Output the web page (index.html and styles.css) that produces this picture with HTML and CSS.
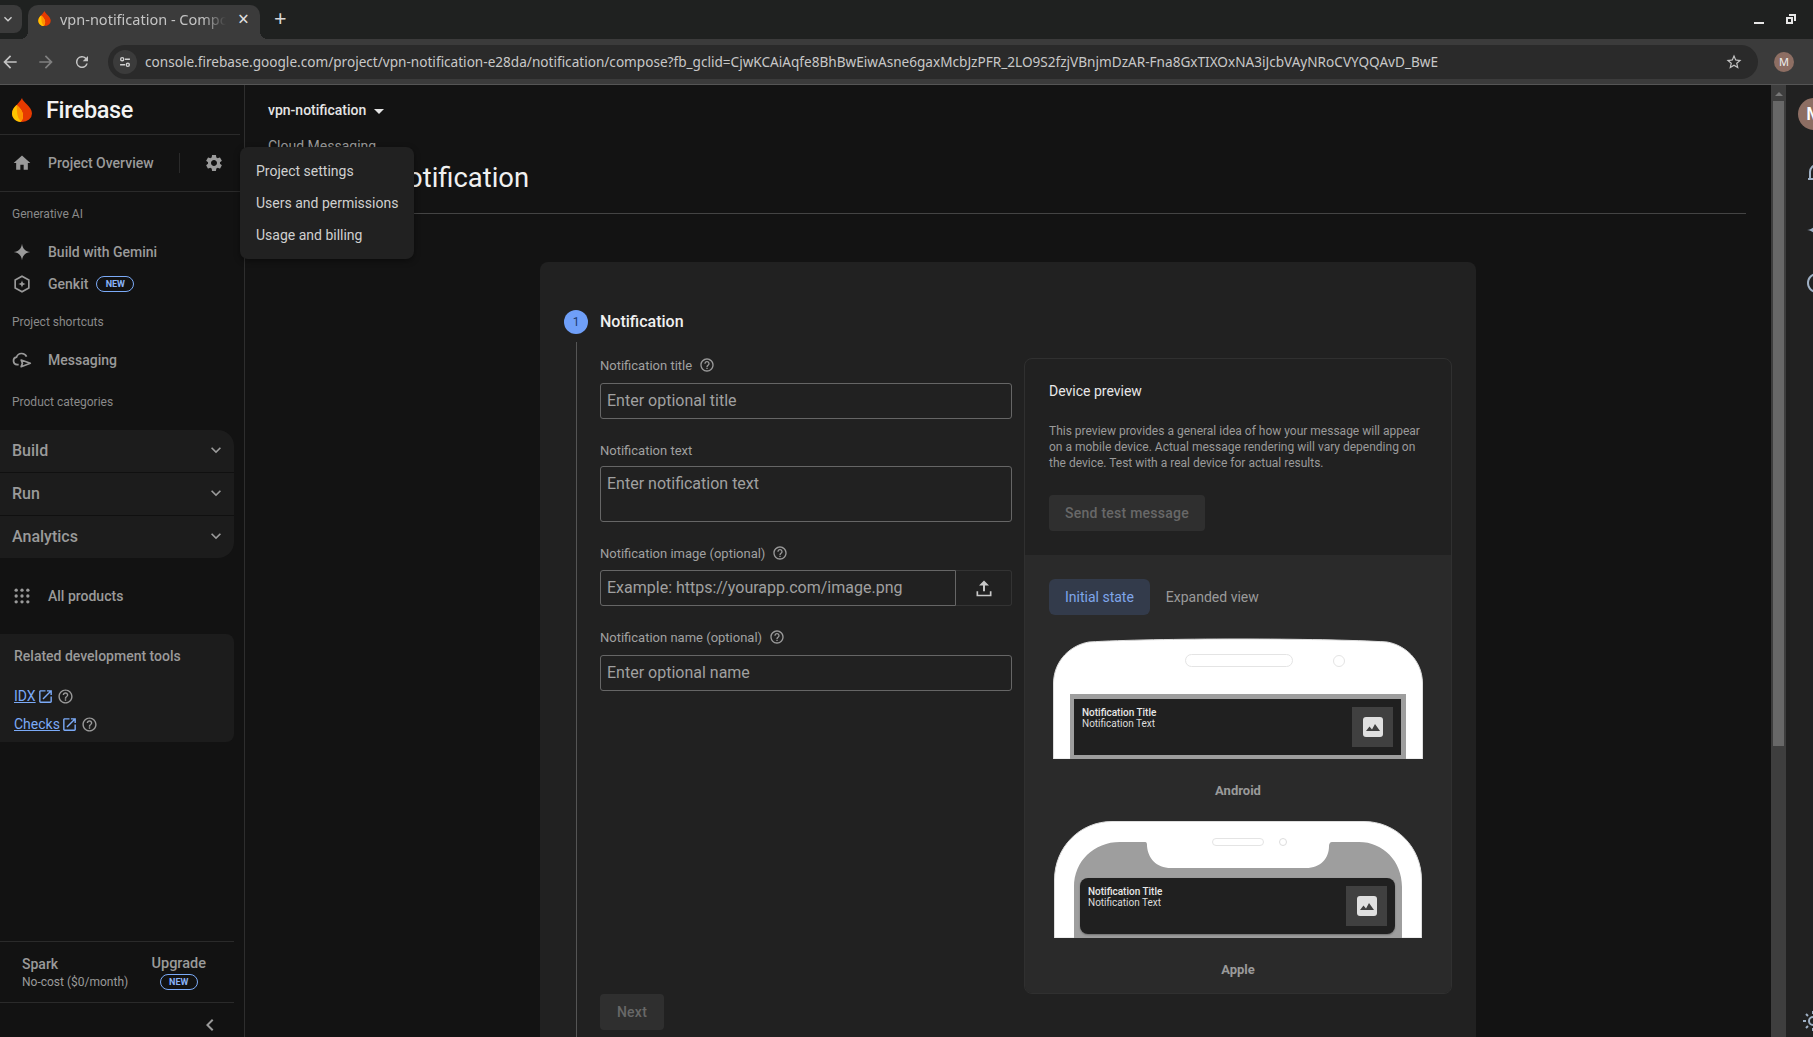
FILE: index.html
```html
<!DOCTYPE html>
<html lang="en">

<head>
  <meta charset="UTF-8" />
  <title>vpn-notification - Compose notification</title>
  <link rel="stylesheet" href="styles.css">
</head>

<body>
  <svg class="icon-defs" width="0" height="0">
    <symbol id="i-home" viewBox="0 0 24 24"><path d="M10 20v-6h4v6h5v-8h3L12 3 2 12h3v8z" /></symbol>
    <symbol id="i-gear" viewBox="0 0 24 24"><path d="M19.14 12.94c.04-.3.06-.61.06-.94 0-.32-.02-.64-.07-.94l2.03-1.58c.18-.14.23-.41.12-.61l-1.92-3.32c-.12-.22-.37-.29-.59-.22l-2.39.96c-.5-.38-1.03-.7-1.62-.94l-.36-2.54c-.04-.24-.24-.41-.48-.41h-3.84c-.24 0-.43.17-.47.41l-.36 2.54c-.59.24-1.13.57-1.62.94l-2.39-.96c-.22-.08-.47 0-.59.22L2.74 8.87c-.12.21-.08.47.12.61l2.03 1.58c-.05.3-.09.63-.09.94s.02.64.07.94l-2.03 1.58c-.18.14-.23.41-.12.61l1.92 3.32c.12.22.37.29.59.22l2.39-.96c.5.38 1.03.7 1.62.94l.36 2.54c.05.24.24.41.48.41h3.84c.24 0 .44-.17.47-.41l.36-2.54c.59-.24 1.13-.56 1.62-.94l2.39.96c.22.08.47 0 .59-.22l1.92-3.32c.12-.22.07-.47-.12-.61l-2.01-1.58zM12 15.6c-1.98 0-3.6-1.62-3.6-3.6s1.62-3.6 3.6-3.6 3.6 1.62 3.6 3.6-1.62 3.6-3.6 3.6z" /></symbol>
    <symbol id="i-spark" viewBox="0 0 24 24"><path d="M12 2C12.8 8 16 11.2 22 12 16 12.8 12.8 16 12 22 11.2 16 8 12.8 2 12 8 11.2 11.2 8 12 2z" /></symbol>
    <symbol id="i-help" viewBox="0 0 24 24"><path d="M11 18h2v-2h-2v2zm1-16C6.48 2 2 6.48 2 12s4.48 10 10 10 10-4.48 10-10S17.52 2 12 2zm0 18c-4.41 0-8-3.59-8-8s3.59-8 8-8 8 3.59 8 8-3.59 8-8 8zm0-14c-2.21 0-4 1.79-4 4h2c0-1.1.9-2 2-2s2 .9 2 2c0 2-3 1.75-3 5h2c0-2.25 3-2.5 3-5 0-2.21-1.79-4-4-4z" /></symbol>
    <symbol id="i-open" viewBox="0 0 24 24"><path d="M19 19H5V5h7V3H5c-1.11 0-2 .9-2 2v14c0 1.1.89 2 2 2h14c1.1 0 2-.9 2-2v-7h-2v7zM14 3v2h3.59l-9.83 9.83 1.41 1.41L19 6.41V10h2V3h-7z" /></symbol>
    <symbol id="i-down" viewBox="0 0 24 24"><path d="M16.59 8.59 12 13.17 7.41 8.59 6 10l6 6 6-6z" /></symbol>
    <symbol id="i-picture" viewBox="0 0 20 20">
      <rect width="20" height="20" rx="3" fill="#e0e0e0" />
      <path d="M3 14l3.5-4.500 2.500 3 3-5.500 5 7z" fill="#404040" />
    </symbol>
  </svg>

  <header class="browser">
    <div class="tab-strip">
      <div class="tab-search"><svg class="ico-16" viewBox="0 0 24 24"><use href="#i-down" /></svg></div>
      <div class="tab">
        <svg class="tab-favicon" viewBox="0 0 20 24">
          <path d="M10 0c.8 4.500 10 8.500 10 15.500a10 8.500 0 0 1-20 0C0 9.500 7 6 10 0z" fill="#e63a00" />
          <path d="M4.500 7C1.500 9.500 0 12.500 0 15.500 0 20 4 24 8.500 24c1.500-1.500 2.500-3.500 2.500-6 0-4.500-3-8.500-6.500-11z" fill="#ffc400" />
          <path d="M4.500 7c3.500 2.500 6.500 6.500 6.500 11 0 2-.7 4-2 5.500-2-2-3.500-5-3.800-8z" fill="#ff9100" />
        </svg>
        <span class="tab-title">vpn-notification - Compose notification</span>
        <span class="tab-close">×</span>
      </div>
      <span class="tab-new">+</span>
      <div class="window-btns">
        <span class="win-min"></span>
        <svg class="win-restore" viewBox="0 0 10 10">
          <path fill-rule="evenodd" d="M3 0h7v7H8V2H3zM0 3h7v7H0zM2 5v3h3V5z" />
        </svg>
      </div>
    </div>
    <div class="toolbar">
      <svg class="tool-ico" viewBox="0 0 24 24"><path d="M20 11H7.800l5.600-5.600L12 4l-8 8 8 8 1.400-1.400L7.800 13H20z" /></svg>
      <svg class="tool-ico dim" viewBox="0 0 24 24"><path d="M4 11h12.200l-5.600-5.600L12 4l8 8-8 8-1.400-1.400 5.600-5.600H4z" /></svg>
      <svg class="tool-ico reload" viewBox="0 0 24 24"><path d="M17.650 6.350A8 8 0 1 0 19.730 14h-2.080A6 6 0 1 1 12 6c1.660 0 3.140.69 4.220 1.780L13 11h7V4z" /></svg>
      <div class="omnibox">
        <span class="site-info">
          <svg viewBox="0 0 20 20" class="site-ico">
            <circle cx="6" cy="6" r="2.200" fill="none" />
            <path d="M10 6h7M3 14h7" fill="none" />
            <circle cx="14" cy="14" r="2.200" fill="none" />
          </svg>
        </span>
        <span class="url">console.firebase.google.com/project/vpn-notification-e28da/notification/compose?fb_gclid=CjwKCAiAqfe8BhBwEiwAsne6gaxMcbJzPFR_2LO9S2fzjVBnjmDzAR-Fna8GxTIXOxNA3iJcbVAyNRoCVYQQAvD_BwE</span>
        <svg class="star" viewBox="0 0 24 24"><path d="M22 9.240l-7.190-.62L12 2 9.190 8.630 2 9.240l5.460 4.730L5.820 21 12 17.270 18.180 21l-1.630-7.030L22 9.240zM12 15.400l-3.760 2.270 1-4.280-3.320-2.880 4.380-.38L12 6.100l1.710 4.040 4.380.38-3.320 2.880 1 4.280L12 15.400z" /></svg>
      </div>
      <span class="profile">M</span>
    </div>
  </header>

  <div class="app">
    <aside class="sidebar">
      <div class="brand">
        <svg class="brand-logo" viewBox="0 0 20 24">
          <path d="M10 0c.8 4.500 10 8.500 10 15.500a10 8.500 0 0 1-20 0C0 9.500 7 6 10 0z" fill="#e63a00" />
          <path d="M4.500 7C1.500 9.500 0 12.500 0 15.500 0 20 4 24 8.500 24c1.500-1.500 2.500-3.500 2.500-6 0-4.500-3-8.500-6.500-11z" fill="#ffc400" />
          <path d="M4.500 7c3.500 2.500 6.500 6.500 6.500 11 0 2-.7 4-2 5.500-2-2-3.500-5-3.800-8z" fill="#ff9100" />
        </svg>
        <span class="brand-name">Firebase</span>
      </div>

      <div class="overview">
        <svg class="nav-ico" viewBox="0 0 24 24"><use href="#i-home" /></svg>
        <span class="overview-name">Project Overview</span>
        <span class="overview-gear"><svg class="nav-ico" viewBox="0 0 24 24"><use href="#i-gear" /></svg></span>
      </div>

      <p class="nav-label">Generative AI</p>
      <div class="nav-item">
        <svg class="nav-ico" viewBox="0 0 24 24"><use href="#i-spark" /></svg>
        <span>Build with Gemini</span>
      </div>
      <div class="nav-item">
        <svg class="nav-ico" viewBox="0 0 24 24">
          <path d="M12 2.600l8.200 4.700v9.400L12 21.400l-8.200-4.700V7.300z" fill="none" stroke="currentColor" stroke-width="2" />
          <path d="M12 7.500c.5 3 1.500 4 4.500 4.500-3 .5-4 1.500-4.500 4.500-.5-3-1.500-4-4.500-4.500 3-.5 4-1.500 4.500-4.500z" />
        </svg>
        <span>Genkit</span>
        <span class="pill">NEW</span>
      </div>

      <p class="nav-label">Project shortcuts</p>
      <div class="nav-item">
        <svg class="nav-ico" viewBox="0 0 24 24">
          <path d="M8 17.500H6a4.500 4.500 0 0 1-.6-8.900A6.500 6.500 0 0 1 17.500 8" fill="none" stroke="currentColor" stroke-width="2" />
          <path d="M11 12l11 4-11 4 1.500-4z" fill="none" stroke="currentColor" stroke-width="2" stroke-linejoin="round" />
        </svg>
        <span>Messaging</span>
      </div>

      <p class="nav-label categories">Product categories</p>
      <div class="accordion">
        <div class="acc-row">Build <svg class="chev" viewBox="0 0 24 24"><use href="#i-down" /></svg></div>
        <div class="acc-row">Run <svg class="chev" viewBox="0 0 24 24"><use href="#i-down" /></svg></div>
        <div class="acc-row">Analytics <svg class="chev" viewBox="0 0 24 24"><use href="#i-down" /></svg></div>
      </div>

      <div class="nav-item all-products">
        <svg class="nav-ico" viewBox="0 0 24 24">
          <circle cx="5" cy="5" r="2" />
          <circle cx="12" cy="5" r="2" />
          <circle cx="19" cy="5" r="2" />
          <circle cx="5" cy="12" r="2" />
          <circle cx="12" cy="12" r="2" />
          <circle cx="19" cy="12" r="2" />
          <circle cx="5" cy="19" r="2" />
          <circle cx="12" cy="19" r="2" />
          <circle cx="19" cy="19" r="2" />
        </svg>
        <span>All products</span>
      </div>

      <div class="related">
        <div class="related-title">Related development tools</div>
        <div class="related-link">
          <a>IDX</a>
          <svg class="open-ico" viewBox="0 0 24 24"><use href="#i-open" /></svg>
          <svg class="help-ico" viewBox="0 0 24 24"><use href="#i-help" /></svg>
        </div>
        <div class="related-link">
          <a>Checks</a>
          <svg class="open-ico" viewBox="0 0 24 24"><use href="#i-open" /></svg>
          <svg class="help-ico" viewBox="0 0 24 24"><use href="#i-help" /></svg>
        </div>
      </div>

      <div class="plan">
        <div>
          <div class="plan-name">Spark</div>
          <div class="plan-cost">No-cost ($0/month)</div>
        </div>
        <div class="plan-upgrade">
          <div class="upgrade-name">Upgrade</div>
          <span class="pill">NEW</span>
        </div>
      </div>
      <div class="collapse">
        <svg viewBox="0 0 24 24"><path d="M15.410 7.410 14 6l-6 6 6 6 1.410-1.410L10.830 12z" /></svg>
      </div>
    </aside>

    <main class="main">
      <div class="page-head">
        <div class="project">vpn-notification <span class="caret"></span></div>
        <div class="crumb">Cloud Messaging</div>
        <h1>Compose notification</h1>
      </div>

      <section class="card">
        <div class="step-head">
          <span class="step-num">1</span>
          <h2>Notification</h2>
        </div>
        <div class="step-body">
          <div class="form">
            <div class="field-label wide">Notification title <svg class="help-ico" viewBox="0 0 24 24"><use href="#i-help" /></svg></div>
            <div class="field-box">Enter optional title</div>

            <div class="field-label tight">Notification text</div>
            <div class="field-box tall">Enter notification text</div>

            <div class="field-label">Notification image (optional) <svg class="help-ico" viewBox="0 0 24 24"><use href="#i-help" /></svg></div>
            <div class="field-group">
              <div class="field-box grow">Example: https://yourapp.com/image.png</div>
              <div class="upload">
                <svg viewBox="0 0 24 24">
                  <path d="M12 3l-6 6h4.800v7h2.400V9H18z" />
                  <path d="M4 16v5h16v-5" fill="none" stroke="currentColor" stroke-width="2" />
                </svg>
              </div>
            </div>

            <div class="field-label wide">Notification name (optional) <svg class="help-ico" viewBox="0 0 24 24"><use href="#i-help" /></svg></div>
            <div class="field-box">Enter optional name</div>

            <div class="btn-disabled next">Next</div>
          </div>

          <div class="preview">
            <div class="preview-top">
              <h3>Device preview</h3>
              <p>This preview provides a general idea of how your message will appear on a mobile device. Actual message rendering will vary depending on the device. Test with a real device for actual results.</p>
              <div class="btn-disabled">Send test message</div>
            </div>
            <div class="preview-bottom">
              <div class="tabs">
                <span class="tab-btn active">Initial state</span>
                <span class="tab-btn">Expanded view</span>
              </div>

              <div class="phone android">
                <svg class="phone-art" viewBox="0 0 370 121">
                  <path d="M.5 121V45C1 22 18 7 36 4 100 0 270 0 334 4c18 3 35 18 35.500 41v76z" fill="#fff" stroke="#ddd" />
                  <rect x="132.500" y="16.500" width="107" height="12" rx="6" fill="#fff" stroke="#e4e4e4" />
                  <circle cx="286" cy="23" r="5.500" fill="#fff" stroke="#e4e4e4" />
                  <rect x="17" y="56" width="336" height="65" fill="#9e9e9e" />
                </svg>
                <div class="notif">
                  <div class="notif-text"><b>Notification Title</b><br>Notification Text</div>
                  <span class="notif-img"><svg viewBox="0 0 20 20"><use href="#i-picture" /></svg></span>
                </div>
              </div>
              <div class="os-name">Android</div>

              <div class="phone apple">
                <svg class="phone-art" viewBox="0 0 368 117">
                  <path d="M.5 117V59C.5 26 26 .5 58 .5h252c32 0 57.500 25.500 57.500 58.500v58z" fill="#fff" stroke="#ddd" />
                  <path d="M20 117V66c0-26 20-45 46-45h25c2 0 2 2 2 4 1 12 9 22 24 22h135c15 0 23-10 23-22 0-2 1-4 3-4h27c24 0 43 19 43 45v51z" fill="#9e9e9e" />
                  <rect x="158.500" y="17.500" width="51" height="7" rx="3.500" fill="#fff" stroke="#e4e4e4" />
                  <circle cx="229" cy="21" r="3.500" fill="#fff" stroke="#ddd" />
                </svg>
                <div class="notif">
                  <div class="notif-text"><b>Notification Title</b><br>Notification Text</div>
                  <span class="notif-img"><svg viewBox="0 0 20 20"><use href="#i-picture" /></svg></span>
                </div>
              </div>
              <div class="os-name">Apple</div>
            </div>
          </div>
        </div>
      </section>
    </main>

    <div class="scrollbar">
      <span class="scroll-up"></span>
      <span class="scroll-thumb"></span>
    </div>

    <aside class="rail">
      <span class="rail-avatar">M</span>
      <svg class="rail-ico bell" viewBox="0 0 24 24">
        <path d="M5 18v-7a7 7 0 0 1 14 0v7M3 18h18M10 21h4" fill="none" stroke="currentColor" stroke-width="2" />
      </svg>
      <svg class="rail-ico spark" viewBox="0 0 24 24"><use href="#i-spark" /></svg>
      <svg class="rail-ico help" viewBox="0 0 24 24"><use href="#i-help" /></svg>
      <svg class="rail-ico sun" viewBox="0 0 24 24">
        <circle cx="12" cy="12" r="4" fill="none" stroke="currentColor" stroke-width="2" />
        <path d="M12 2v3M12 19v3M2 12h3M19 12h3M5 5l2 2M17 17l2 2M5 19l2-2M17 7l2-2" fill="none" stroke="currentColor" stroke-width="2" />
      </svg>
    </aside>

    <!-- settings menu opened from the gear, sits over the page heading -->
    <div class="menu">
      <div>Project settings</div>
      <div>Users and permissions</div>
      <div>Usage and billing</div>
    </div>
  </div>
</body>

</html>
```
FILE: styles.css
```css
* {
  box-sizing: border-box;
}

body {
  margin: 0;
  width: 1813px;
  height: 1037px;
  overflow: hidden;
  background: #131313;
  font-family: Roboto, 'Liberation Sans', sans-serif;
  color: #9a9a9a;
}

h1,
h2,
h3,
p {
  margin: 0;
}

.icon-defs {
  position: absolute;
}

svg {
  fill: currentColor;
  display: block;
}

/* browser chrome */
.browser {
  height: 85px;
  font-family: 'Noto Sans', sans-serif;
}

.tab-strip {
  height: 39px;
  background: #1f2120;
  display: flex;
  align-items: flex-end;
  color: #d0d0d0;
}

.tab-search {
  width: 22px;
  height: 28px;
  margin-bottom: 6px;
  background: #3b3b3b;
  border-radius: 0 8px 8px 0;
  display: flex;
  align-items: center;
}

.ico-16 {
  width: 16px;
  height: 16px;
}

.tab {
  position: relative;
  width: 232px;
  height: 34px;
  margin-left: 6px;
  background: #3b3b3b;
  border-radius: 10px 10px 0 0;
  display: flex;
  align-items: center;
  padding: 0 10px 7px;
}

.tab:before,
.tab:after {
  content: "";
  position: absolute;
  bottom: 0;
  width: 8px;
  height: 8px;
}

.tab:before {
  left: -8px;
  background: radial-gradient(circle at 0 0, transparent 8px, #3b3b3b 8px);
}

.tab:after {
  right: -8px;
  background: radial-gradient(circle at 100% 0, transparent 8px, #3b3b3b 8px);
}

.tab-favicon {
  width: 13px;
  height: 15px;
  flex: none;
}

.tab-title {
  width: 166px;
  margin-left: 9px;
  font-size: 14.500px;
  line-height: 20px;
  white-space: nowrap;
  overflow: hidden;
  color: #c4c4c4;
  -webkit-mask-image: linear-gradient(to right, #000 86%, transparent);
  mask-image: linear-gradient(to right, #000 86%, transparent);
}

.tab-close {
  margin-left: 12px;
  font-size: 19px;
  line-height: 20px;
  color: #e0e0e0;
}

.tab-new {
  margin: 0 0 10px 14px;
  font-size: 22px;
  line-height: 24px;
  color: #d8d8d8;
}

.window-btns {
  margin-left: auto;
  display: flex;
  align-items: center;
  gap: 22px;
  height: 39px;
  padding-right: 17px;
}

.win-min {
  width: 10px;
  height: 2px;
  margin-top: 7px;
  background: #e6e6e6;
}

.win-restore {
  width: 10px;
  height: 10px;
  margin-bottom: 1px;
  color: #e6e6e6;
}

.toolbar {
  height: 46px;
  background: #3b3b3b;
  border-bottom: 1px solid #555;
  display: flex;
  align-items: center;
  color: #c4c4c4;
}

.tool-ico {
  width: 20px;
  height: 20px;
  margin-right: 16px;
}

.tool-ico.dim {
  color: #808080;
}

.tool-ico.reload {
  width: 18px;
  height: 18px;
  margin: 0 17px 0 1px;
}

.omnibox {
  width: 1650px;
  height: 34px;
  background: #2a2a2a;
  border-radius: 17px;
  display: flex;
  align-items: center;
  padding: 0 15px 0 5px;
}

.site-info {
  width: 24px;
  height: 24px;
  border-radius: 50%;
  background: #3b3b3b;
  display: flex;
  align-items: center;
  justify-content: center;
  flex: none;
}

.site-ico {
  width: 14px;
  height: 14px;
  stroke: #d0d0d0;
  stroke-width: 2;
}

.url {
  margin-left: 8px;
  font-size: 13.600px;
  color: #c8c8c8;
  white-space: nowrap;
}

.star {
  width: 18px;
  height: 18px;
  margin-left: auto;
  color: #c4c4c4;
}

.profile {
  width: 20px;
  height: 20px;
  margin-left: 16px;
  border-radius: 50%;
  background: #8d6e63;
  color: #eee;
  font-size: 11px;
  display: flex;
  align-items: center;
  justify-content: center;
}

/* page */
.app {
  position: relative;
  display: flex;
  height: 952px;
}

.sidebar {
  width: 245px;
  flex: none;
  background: #121212;
  border-right: 1px solid #2e2e2e;
  display: flex;
  flex-direction: column;
  font-size: 14px;
}

.brand {
  height: 50px;
  width: 240px;
  border-bottom: 1px solid #2a2a2a;
  display: flex;
  align-items: center;
  padding-left: 12px;
  gap: 14px;
}

.brand-logo {
  width: 20px;
  height: 24px;
}

.brand-name {
  font-size: 23.500px;
  font-weight: 500;
  letter-spacing: -0.4px;
  color: #f2f2f2;
}

.overview {
  height: 57px;
  width: 240px;
  border-bottom: 1px solid #2a2a2a;
  display: flex;
  align-items: center;
  padding-left: 12px;
  gap: 16px;
  font-weight: 500;
}

.nav-ico {
  width: 20px;
  height: 20px;
  flex: none;
}

.overview-name {
  width: 115px;
  white-space: nowrap;
}

.overview-gear {
  height: 20px;
  border-left: 1px solid #2a2a2a;
  padding-left: 24px;
}

.nav-label {
  margin-top: 14px;
  padding-left: 12px;
  font-size: 12px;
  line-height: 16px;
  color: #8a8a8a;
}

.nav-label.categories {
  margin-top: 18px;
}

.nav-item {
  height: 32px;
  display: flex;
  align-items: center;
  padding-left: 12px;
  gap: 16px;
  font-weight: 500;
}

.nav-label + .nav-item {
  margin-top: 14px;
}

.nav-item .pill {
  margin-left: -8px;
}

.pill {
  display: inline-block;
  width: 38px;
  height: 16px;
  border: 1px solid #7baaf7;
  border-radius: 8px;
  color: #8ab4f8;
  font-size: 9px;
  font-weight: 700;
  line-height: 14px;
  text-align: center;
}

.accordion {
  margin-top: 20px;
  width: 234px;
  background: #1c1c1c;
  border-radius: 0 16px 16px 0;
}

.acc-row {
  height: 43px;
  padding: 0 12px 2px;
  border-bottom: 1px solid #101010;
  display: flex;
  align-items: center;
  justify-content: space-between;
  font-size: 16px;
  font-weight: 500;
}

.acc-row:last-child {
  height: 42px;
  border-bottom: 0;
}

.chev {
  width: 20px;
  height: 20px;
  margin-right: -4px;
}

.all-products {
  margin-top: 22px;
}

.related {
  margin-top: 22px;
  width: 234px;
  height: 108px;
  padding: 14px;
  background: #1c1c1c;
  border-radius: 0 8px 8px 0;
}

.related-title {
  line-height: 16px;
  font-weight: 500;
  margin-bottom: 18px;
  white-space: nowrap;
}

.related-link {
  height: 28px;
  display: flex;
  align-items: center;
  gap: 1px;
}

.related-link a {
  color: #7baaf7;
  text-decoration: underline;
}

.open-ico {
  width: 17px;
  height: 17px;
  color: #7baaf7;
}

.help-ico {
  width: 16px;
  height: 16px;
  color: #9a9a9a;
}

.related-link .help-ico {
  width: 17px;
  height: 17px;
  margin-left: 2px;
}

.plan {
  margin-top: auto;
  width: 234px;
  height: 62px;
  border-top: 1px solid #2a2a2a;
  border-bottom: 1px solid #2a2a2a;
  padding: 0 28px 0 22px;
  display: flex;
  align-items: center;
  justify-content: space-between;
}

.plan-name {
  font-weight: 500;
  line-height: 19px;
}

.plan-cost {
  font-size: 12px;
  line-height: 16px;
}

.plan-upgrade {
  text-align: center;
  font-weight: 500;
}

.upgrade-name {
  font-size: 14.500px;
  line-height: 17px;
}

.collapse {
  height: 34px;
  display: flex;
  align-items: center;
  padding: 9px 0 0 198px;
}

.collapse svg {
  width: 24px;
  height: 24px;
}

.main {
  width: 1526px;
  flex: none;
  height: 952px;
  background: #131313;
}

.page-head {
  margin-left: 23px;
  width: 1478px;
  padding-top: 15px;
  padding-bottom: 19px;
  border-bottom: 1px solid #444;
}

.project {
  font-size: 14px;
  line-height: 20px;
  font-weight: 500;
  color: #e4e4e4;
}

.caret {
  display: inline-block;
  margin-left: 4px;
  vertical-align: middle;
  border: 5px solid transparent;
  border-top-color: #e4e4e4;
  border-bottom: 0;
}

.crumb {
  margin-top: 16px;
  font-size: 14px;
  line-height: 20px;
  color: #9a9a9a;
}

h1 {
  margin-top: 6px;
  font-size: 27.400px;
  line-height: 32px;
  font-weight: 400;
  color: #f0f0f0;
}

.menu {
  position: absolute;
  left: 240px;
  top: 62px;
  width: 174px;
  height: 112px;
  padding: 8px 16px;
  background: #212121;
  border-radius: 8px;
  font-size: 14px;
  line-height: 32px;
  color: #d0d0d0;
  white-space: nowrap;
  box-shadow: 0 2px 6px rgba(0, 0, 0, .4);
}

.card {
  margin: 48px 0 0 295px;
  width: 936px;
  background: #212121;
  border-radius: 8px 8px 0 0;
  padding: 48px 24px 40px;
  height: 800px;
}

.step-head {
  display: flex;
  align-items: center;
  gap: 12px;
}

.step-num {
  width: 24px;
  height: 24px;
  border-radius: 50%;
  background: #6f9ff8;
  color: #1c3a6e;
  font-size: 12px;
  line-height: 24px;
  text-align: center;
}

h2 {
  font-size: 16px;
  font-weight: 500;
  margin-top: -2px;
  color: #f0f0f0;
}

.step-body {
  margin: 8px 0 0 12px;
  border-left: 1px solid #555;
  padding: 16px 0 0 23px;
  display: flex;
  gap: 12px;
  align-items: flex-start;
  height: 700px;
}

.form {
  width: 412px;
  flex: none;
}

.field-label {
  display: flex;
  align-items: center;
  gap: 7px;
  height: 14px;
  margin: 24px 0 10px;
  font-size: 13px;
  color: #a0a0a0;
}

.field-label:first-child {
  margin-top: 0;
}

.field-label.wide {
  margin-bottom: 11px;
}

.field-label.tight {
  margin-bottom: 9px;
}

.field-box {
  height: 36px;
  padding: 0 6px;
  border: 1px solid #666;
  border-radius: 3px;
  font-size: 16px;
  line-height: 33px;
  color: #a0a0a0;
}

.field-box.tall {
  height: 56px;
}

.field-group {
  display: flex;
}

.field-box.grow {
  width: 356px;
  border-radius: 3px 0 0 3px;
}

.upload {
  flex: 1;
  border: 1px solid #333;
  border-left: 0;
  border-radius: 0 3px 3px 0;
  display: flex;
  align-items: center;
  justify-content: center;
  color: #c8c8c8;
}

.upload svg {
  width: 20px;
  height: 20px;
}

.btn-disabled {
  display: inline-block;
  min-width: 64px;
  height: 36px;
  padding: 0 16px;
  background: #2f2f2f;
  border-radius: 4px;
  font-size: 14px;
  font-weight: 500;
  letter-spacing: .25px;
  line-height: 36px;
  text-align: center;
  color: #686868;
}

.next {
  margin-top: 303px;
}

.preview {
  width: 428px;
  height: 636px;
  flex: none;
  border: 1px solid #303030;
  border-radius: 8px;
  overflow: hidden;
}

.preview-top {
  height: 196px;
  padding: 23px 24px 0;
}

h3 {
  font-size: 14px;
  line-height: 18px;
  font-weight: 400;
  color: #e8e8e8;
}

.preview-top p {
  margin: 23px 0 24px;
  font-size: 12px;
  line-height: 16px;
  color: #9a9a9a;
}

.preview-bottom {
  height: 440px;
  background: #2a2a2a;
  padding: 24px 24px 0;
}

.tabs {
  display: flex;
}

.tab-btn {
  height: 36px;
  padding: 0 16px;
  border-radius: 6px;
  font-size: 14px;
  line-height: 36px;
}

.tab-btn.active {
  background: #333b4b;
  color: #7fa6ea;
}

.phone {
  position: relative;
  margin: 23px auto 0;
}

.phone-art {
  position: absolute;
  left: 0;
  top: 0;
  width: 100%;
  height: 100%;
}

.phone.android {
  width: 370px;
  height: 121px;
  padding: 61px 0 0 21px;
}

.phone.apple {
  width: 368px;
  height: 117px;
  padding: 57px 0 0 26px;
  margin-top: 22px;
}

.notif {
  position: relative;
  width: 327px;
  height: 56px;
  background: #202020;
  padding: 8px;
  display: flex;
  justify-content: space-between;
}

.apple .notif {
  width: 315px;
  border-radius: 8px;
  box-shadow: 0 1px 2px rgba(0, 0, 0, .3);
}

.notif-text {
  font-size: 10px;
  line-height: 11px;
  color: #dcdcdc;
}

.notif-text b {
  font-weight: 500;
  color: #e8e8e8;
}

.notif-img {
  width: 41px;
  height: 40px;
  background: #404040;
  display: flex;
  align-items: center;
  justify-content: center;
}

.notif-img svg {
  width: 20px;
  height: 20px;
}

.os-name {
  margin-top: 24px;
  font-size: 13px;
  line-height: 16px;
  font-weight: 700;
  text-align: center;
  color: #9a9a9a;
}

.scrollbar {
  width: 15px;
  flex: none;
  background: #3e3e3e;
  padding: 0 2px;
  display: flex;
  flex-direction: column;
  align-items: center;
}

.scroll-up {
  margin-top: 7px;
  border: 4px solid transparent;
  border-bottom-color: #777;
  border-top: 0;
}

.scroll-thumb {
  width: 11px;
  height: 645px;
  margin-top: 5px;
  background: #686868;
}

.rail {
  flex: 1;
  background: #212121;
  overflow: hidden;
  color: #9fb0c4;
  display: flex;
  flex-direction: column;
  padding: 13px 0 0 12px;
}

.rail-avatar {
  width: 32px;
  height: 32px;
  flex: none;
  border-radius: 50%;
  background: #8d6e63;
  color: #fff;
  font-size: 18px;
  font-weight: 500;
  line-height: 32px;
  text-align: center;
}

.rail-ico {
  width: 24px;
  height: 24px;
  flex: none;
  margin: 31px 0 0 7px;
}

.rail-ico.spark {
  margin-top: 33px;
}

.rail-ico.help {
  margin-top: 29px;
}

.rail-ico.sun {
  margin: auto 0 4px 3px;
}
```
